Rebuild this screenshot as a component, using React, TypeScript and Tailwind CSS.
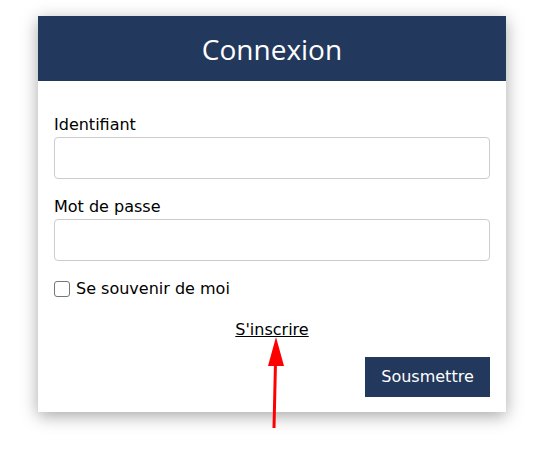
import React from "react";

const LoginCard: React.FC = () => {
  return (
    <div className="w-[468px] bg-white shadow-[0_4px_16px_rgba(0,0,0,0.35)]">
      <div className="flex h-[65px] items-center justify-center bg-[#22385c]">
        <h1 className="font-['Open_Sans',sans-serif] text-[28px] font-normal text-white">Connexion</h1>
      </div>
      <form className="px-4 pt-[34px] pb-[15px] font-['DejaVu_Sans',Verdana,sans-serif] text-[16px] text-black">
        <label className="block leading-[20px]">Identifiant</label>
        <input className="mt-[2px] block h-[42px] w-full rounded-[4px] border border-[#cccccc] px-2 outline-none" />
        <label className="mt-[18px] block leading-[20px]">Mot de passe</label>
        <input
          type="password"
          className="mt-[2px] block h-[42px] w-full rounded-[4px] border border-[#cccccc] px-2 outline-none"
        />
        <div className="mt-[18px] flex items-center gap-[6px]">
          <span className="h-[16px] w-[16px] rounded-[3px] border border-[#767676] bg-white" />
          <span className="leading-[20px]">Se souvenir de moi</span>
        </div>
        <div className="mt-[21px] text-center leading-[20px]">
          <a href="#" className="text-black underline">
            S'inscrire
          </a>
        </div>
        <div className="mt-[17px] flex justify-end">
          <button
            type="button"
            className="h-[40px] w-[125px] bg-[#22385c] text-white"
          >
            Sousmettre
          </button>
        </div>
      </form>
    </div>
  );
};

export default function App() {
  return (
    <div className="relative h-[454px] w-[549px] bg-white pl-[38px] pt-[16px]">
      <LoginCard />
      <svg className="absolute left-0 top-0" width="549" height="454" viewBox="0 0 549 454">
        <line x1="274" y1="428" x2="275.5" y2="362" stroke="#ff0000" strokeWidth="3" />
        <polygon points="276,337 268,366 284,366" fill="#ff0000" />
      </svg>
    </div>
  );
}
